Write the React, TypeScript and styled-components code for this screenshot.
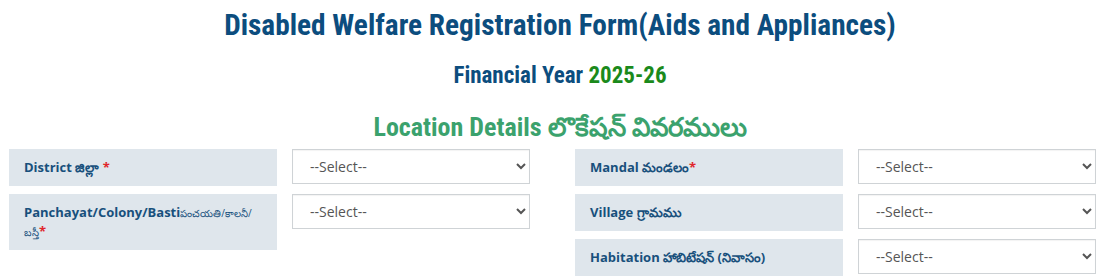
import styled, { createGlobalStyle } from "styled-components";

const GlobalStyle = createGlobalStyle`
  body {
    margin: 0;
    background: #ffffff;
    font-family: "Open Sans", "Noto Sans", sans-serif;
  }
`;

const Page = styled.div`
  width: 1100px;
  height: 276px;
  overflow: hidden;
`;

const Header = styled.header`
  display: flex;
  flex-direction: column;
  align-items: center;
  padding-left: 20px;
  font-family: "Roboto Condensed", Roboto, sans-serif;
  font-stretch: condensed;
  font-weight: 700;
`;

const Title = styled.h1`
  margin: 7px 0 0;
  font-size: 29.3px;
  line-height: 36px;
  color: #0c4d7e;
  font-weight: 700;
`;

const SubTitle = styled.h2`
  margin: 19px 0 0;
  font-size: 23px;
  line-height: 28px;
  color: #0c4d7e;
  font-weight: 700;
`;

const Year = styled.span`
  color: #1b8a1b;
`;

const Section = styled.h3`
  margin: 21px 0 0;
  font-size: 26px;
  line-height: 32px;
  color: #3ba26d;
  font-weight: 700;
`;

const Form = styled.div`
  display: grid;
  grid-template-columns: 521px 521px;
  column-gap: 45px;
  padding: 6px 0 0 9px;
`;

const Column = styled.div`
  display: flex;
  flex-direction: column;
  gap: 8px;
`;

const Row = styled.div`
  display: grid;
  grid-template-columns: 268px 238px;
  column-gap: 15px;
  align-items: start;
`;

const Label = styled.label`
  display: block;
  background: #dfe6ec;
  padding: 9px 15px;
  font-size: 13px;
  line-height: 19px;
  font-weight: 700;
  color: #18507c;
`;

const Small = styled.span`
  font-size: 10px;
  line-height: 16px;
  font-weight: 400;
`;

const Star = styled.span`
  color: #e0262b;
`;

const Select = styled.select`
  height: 35px;
  width: 100%;
  padding: 0 10px 0 13px;
  border: 1px solid #cfd3d6;
  border-radius: 0;
  background: #ffffff;
  font-family: "Open Sans", sans-serif;
  font-size: 14px;
  color: #555555;
  box-shadow: inset 0 1px 1px rgba(0, 0, 0, 0.05);
`;

function Field({ label, id }: { label: React.ReactNode; id: string }) {
  return (
    <Row>
      <Label htmlFor={id}>{label}</Label>
      <Select id={id} defaultValue="">
        <option value="">--Select--</option>
      </Select>
    </Row>
  );
}

export default function App() {
  return (
    <Page>
      <GlobalStyle />
      <Header>
        <Title>Disabled Welfare Registration Form(Aids and Appliances)</Title>
        <SubTitle>
          Financial Year <Year>2025-26</Year>
        </SubTitle>
        <Section>Location Details లొకేషన్ వివరములు</Section>
      </Header>

      <Form>
        <Column>
          <Field
            id="district"
            label={
              <>
                District జిల్లా <Star>*</Star>
              </>
            }
          />
          <Field
            id="panchayat"
            label={
              <>
                Panchayat/Colony/Basti<Small>పంచయతి/కాలనీ/బస్తీ</Small>
                <Star>*</Star>
              </>
            }
          />
        </Column>
        <Column>
          <Field
            id="mandal"
            label={
              <>
                Mandal మండలం<Star>*</Star>
              </>
            }
          />
          <Field id="village" label={<>Village గ్రామము</>} />
          <Field id="habitation" label={<>Habitation హాబిటేషన్ (నివాసం)</>} />
        </Column>
      </Form>
    </Page>
  );
}
